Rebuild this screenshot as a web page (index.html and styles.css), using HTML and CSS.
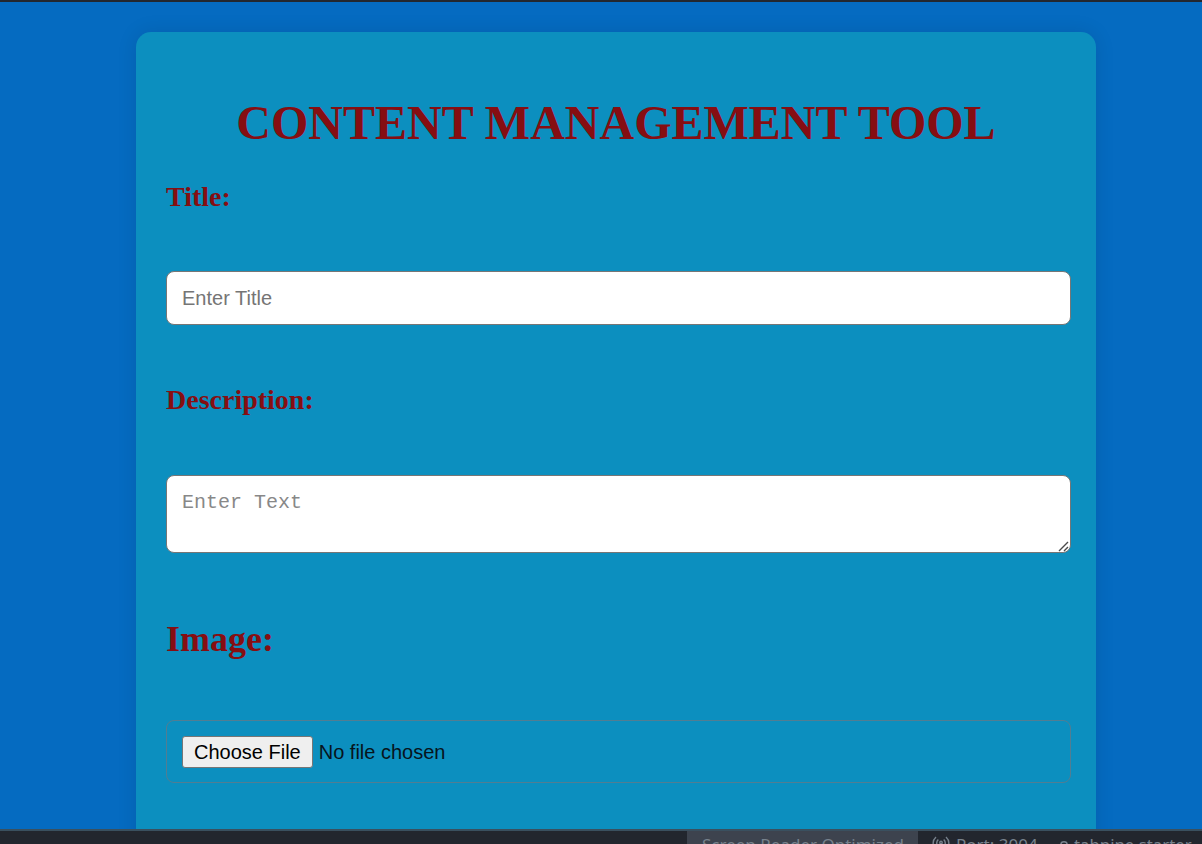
FILE: index.html
```html
<!DOCTYPE html>
<html lang="en">
<head>
<meta charset="utf-8">
<title>Content Management Tool</title>
<link rel="stylesheet" href="styles.css">
</head>
<body>
<main class="page">
  <form class="card">
    <h1 class="heading">CONTENT MANAGEMENT TOOL</h1>
    <label class="label label-title" for="title">Title:</label>
    <input class="field field-title" id="title" type="text" placeholder="Enter Title">
    <label class="label label-description" for="description">Description:</label>
    <div class="textarea-wrap">
      <textarea class="field field-description" id="description" placeholder="Enter Text"></textarea>
      <svg class="grip" viewBox="0 0 12 11" fill="none" stroke="#4a4a4a" stroke-width="1.4">
        <path d="M1 10L10 1M6 10L10 6"/>
      </svg>
    </div>
    <label class="label label-image" for="image">Image:</label>
    <input class="field field-file" id="image" type="file">
  </form>
</main>
<footer class="status">
  <span class="status-item status-active">Screen Reader Optimized</span>
  <span class="status-item status-port">
    <svg class="antenna" viewBox="0 0 18 16" fill="none" stroke="currentColor" stroke-width="1.4">
      <path d="M4 1C0.2 4.5 0.2 9.5 4 13M6.3 3.5C4.2 5.5 4.2 8.5 6.3 10.5M14 1C17.8 4.5 17.8 9.5 14 13M11.7 3.5C13.8 5.5 13.8 8.5 11.7 10.5M9 7V15"/>
      <circle cx="9" cy="6.5" r="1.2"/>
    </svg>
    <span>Port: 3004</span>
  </span>
  <span class="status-item status-tabnine">
    <svg class="tabnine" viewBox="0 0 8 10" fill="none" stroke="currentColor" stroke-width="1.5">
      <path d="M1 8V4C1 1 7 1 7 4V8"/>
    </svg>
    <span>tabnine starter</span>
  </span>
</footer>
</body>
</html>
```
FILE: styles.css
```css
* { box-sizing: border-box; }
body {
  margin: 0;
  height: 844px;
  overflow: hidden;
  display: flex;
  flex-direction: column;
  background: #056bc1;
  font-family: "Liberation Serif", "Times New Roman", serif;
}
.page {
  height: 829px;
  flex: none;
  overflow: hidden;
  border-top: 2px solid #23272f;
  padding: 30px 106px 0 136px;
}
.card {
  display: flex;
  flex-direction: column;
  height: 960px;
  padding: 63px 25px 30px 30px;
  border-radius: 15px;
  background: #0c8fbf;
  box-shadow: 0 0 20px rgba(0, 0, 0, 0.1);
}
.heading {
  margin: 0;
  padding-right: 5px;
  color: #860e12;
  font-size: 48px;
  line-height: 56px;
  text-align: center;
  white-space: nowrap;
}
.label {
  color: #860e12;
  font-size: 28px;
  font-weight: bold;
  line-height: 32px;
}
.label-title { margin-top: 30px; }
.label-description { margin-top: 59px; }
.label-image { margin-top: 65px; font-size: 36px; line-height: 42px; }
.field {
  display: block;
  width: 905px;
  margin: 0;
  padding: 15px;
  border: 1px solid #767676;
  border-radius: 8px;
  font: 20px "Liberation Sans", Arial, sans-serif;
}
.field::placeholder { color: #757575; }
.field-title { height: 54px; margin-top: 58px; background: #fff; }
.textarea-wrap { position: relative; margin-top: 59px; }
.field-description {
  height: 78px;
  resize: none;
  background: #fff;
  font-family: "Liberation Mono", "Courier New", monospace;
}
.field-description::placeholder { color: #888; }
.grip {
  position: absolute;
  right: 1px;
  bottom: 1px;
  width: 12px;
  height: 11px;
}
.field-file { height: 63px; margin-top: 60px; color: #07141c; border-color: #527d92; }
.field-file::file-selector-button {
  height: 32px;
  margin: 0 6px 0 0;
  padding: 0 11px;
  border: 1px solid #767676;
  border-radius: 3px;
  background: #efefef;
  color: #000;
  font: 20px "Liberation Sans", Arial, sans-serif;
}
.status {
  flex: none;
  height: 15px;
  display: flex;
  padding-left: 687px;
  overflow: hidden;
  border-top: 2px solid #3a505f;
  background: #22262e;
  color: #77818c;
  font: 17px/28px "Noto Sans", sans-serif;
  white-space: nowrap;
}
.status-item { flex: none; height: 28px; }
.status-active { width: 231px; padding-left: 15px; background: #3d434e; }
.status-port { width: 142px; padding-left: 14px; display: flex; gap: 6px; }
.status-tabnine { display: flex; gap: 6px; font-size: 16.8px; }
.antenna { width: 18px; height: 16px; margin-top: 5px; }
.tabnine { width: 8px; height: 10px; margin-top: 9px; }
```
